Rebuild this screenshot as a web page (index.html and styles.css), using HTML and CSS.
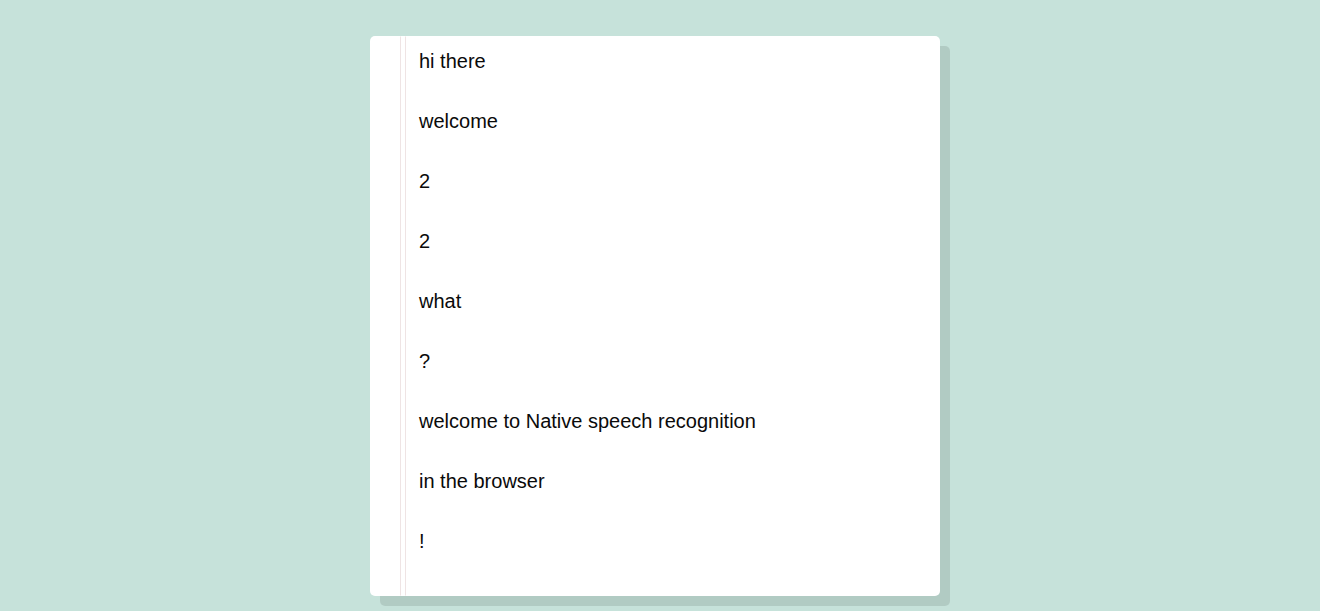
FILE: index.html
```html
<!DOCTYPE html>
<html>
<head>
<meta charset="utf-8">
<link rel="stylesheet" href="styles.css">
</head>
<body>
<div class="words">
  <p>hi there</p>
  <p>welcome</p>
  <p>2</p>
  <p>2</p>
  <p>what</p>
  <p>?</p>
  <p>welcome to Native speech recognition</p>
  <p>in the browser</p>
  <p>!</p>
</div>
</body>
</html>
```
FILE: styles.css
```css
html, body {
  margin: 0;
  padding: 0;
}
body {
  background: #c6e2da;
  font-family: "Liberation Sans", Arial, sans-serif;
  font-size: 20px;
  color: #0a0a0a;
  padding: 36px 10px 0 0;
  height: 611px;
  box-sizing: border-box;
  overflow: hidden;
}
.words {
  width: 570px;
  box-sizing: border-box;
  margin: 0 auto;
  background: #fff;
  border-radius: 5px;
  box-shadow: 10px 10px 0 rgba(0, 0, 0, 0.1);
  padding: 10px 20px 10px 49px;
  position: relative;
  line-height: 30px;
}
.words::before {
  content: "";
  position: absolute;
  top: 0;
  bottom: 0;
  left: 30px;
  width: 4px;
  border: 1px solid;
  border-color: transparent #efe4e4;
}
.words p {
  margin: 0 0 30px;
}
```
